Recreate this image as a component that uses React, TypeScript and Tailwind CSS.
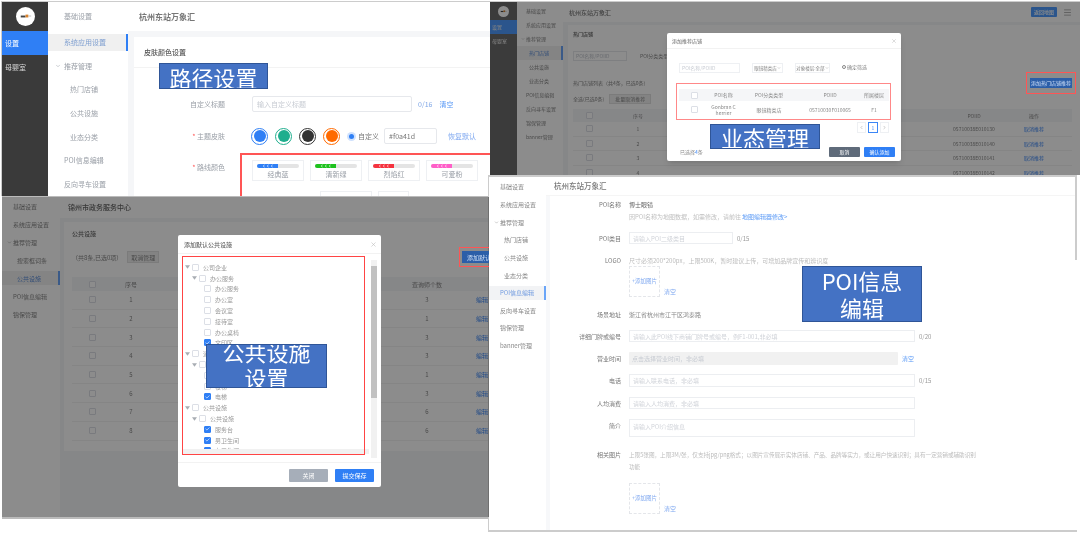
import type { ReactNode } from 'react';
import { Check, ChevronDown, ChevronLeft, ChevronRight, Menu, X } from 'lucide-react';

function Logo({ size }: { size: string }) {
  return (
    <div className={`${size} rounded-full bg-white flex items-center justify-center`}>
      <svg viewBox="0 0 20 20" className="w-full h-full">
        <rect x="5" y="9" width="5" height="2" fill="#444" />
        <rect x="10" y="8" width="3" height="3" fill="#d9822b" />
        <rect x="13" y="9" width="3" height="1" fill="#bbb" />
      </svg>
    </div>
  );
}

// big blue captions pasted over the screenshots
function Caption({ className, children }: { className: string; children: ReactNode }) {
  return (
    <div className={`absolute z-30 bg-[#4472c4] border border-[#2f5597] text-white text-[22px] text-center overflow-hidden ${className}`}>
      {children}
    </div>
  );
}

function Box({ checked, className = '' }: { checked?: boolean; className?: string }) {
  return (
    <span className={`inline-flex shrink-0 items-center justify-center w-[7px] h-[7px] rounded-[1px] border ${checked ? 'bg-[#2f7ff5] border-[#2f7ff5]' : 'bg-white border-[#dcdfe6]'} ${className}`}>
      {checked && <Check size={6} strokeWidth={3} className="text-white" />}
    </span>
  );
}

function Tri() {
  return (
    <svg viewBox="0 0 6 4" className="w-[5px] h-[4px] shrink-0">
      <polygon points="0,0 6,0 3,4" fill="#a8adb3" />
    </svg>
  );
}

const swatches = [
  { name: '经典蓝', bar: 'bg-[#2f7ff5]' },
  { name: '清新绿', bar: 'bg-[#1fc21f]' },
  { name: '烈焰红', bar: 'bg-[#f5333f]' },
  { name: '可爱粉', bar: 'bg-[#ff5fc8]' },
];

function PathWindow() {
  return (
    <section className="absolute left-[1px] top-[1px] w-[489px] h-[195px] flex overflow-hidden bg-white text-[7px] text-[#9ba0a8] border-t border-l border-[#ccc]">
      <div className="w-[46px] shrink-0 bg-[#3a3a3a] flex flex-col text-[#d8d8d8]">
        <div className="h-[29px] flex items-center justify-center"><Logo size="w-[19px] h-[19px]" /></div>
        <div className="h-[24px] bg-[#2f7ff5] text-white flex items-center pl-[3px]">设置</div>
        <div className="h-[24px] flex items-center pl-[3px]">母婴室</div>
      </div>
      <nav className="w-[80px] shrink-0 flex flex-col">
        <div className="h-[29px] flex items-center pl-[16px]">基础设置</div>
        <div className="h-[18px] my-[3px] bg-[#f0f0f0] border-r-2 border-[#2f7ff5] flex items-center pl-[16px] text-[#7f9fd0]">系统应用设置</div>
        <div className="h-[24px] flex items-center pl-[7px] gap-[3px]"><ChevronDown size={6} />推荐管理</div>
        <div className="h-[24px] flex items-center pl-[22px]">热门店铺</div>
        <div className="h-[24px] flex items-center pl-[22px]">公共设施</div>
        <div className="h-[24px] flex items-center pl-[22px]">业态分类</div>
        <div className="h-[24px] flex items-center pl-[16px]">POI信息编辑</div>
        <div className="h-[24px] flex items-center pl-[16px]">反向寻车设置</div>
      </nav>
      <div className="flex-1 flex flex-col bg-[#f5f6f8]">
        <header className="h-[29px] shrink-0 bg-white flex items-center pl-[11px] text-[8px] font-bold text-[#777]">杭州东站万象汇</header>
        <div className="relative flex-1 ml-[6px] mt-[6px] bg-white">
          <div className="h-[31px] border-b border-[#f3f3f3] flex items-center pl-[10px] text-[#555] font-medium">皮肤颜色设置</div>
          <div className="mt-[28px] h-[16px] flex items-center">
            <span className="w-[91px] text-right">自定义标题</span>
            <span className="ml-[27px] w-[160px] h-full border border-[#e6e8ec] rounded-[2px] flex items-center pl-[4px] text-[#c8ccd3]">输入自定义标题</span>
            <span className="ml-[6px] text-[#7fa6e6]">0/16</span>
            <span className="ml-[7px] text-[#5b9af6]">清空</span>
          </div>
          <div className="mt-[15px] h-[18px] flex items-center">
            <span className="w-[91px] text-right"><span className="text-[#f55]">* </span>主题皮肤</span>
            <div className="ml-[26px] flex gap-[7px]">
              <span className="w-[17px] h-[17px] rounded-full border border-[#2f7ff5] p-[1.5px]"><span className="block w-full h-full rounded-full bg-[#2f7ff5]" /></span>
              <span className="w-[17px] h-[17px] rounded-full border border-[#1fae8e] p-[1.5px]"><span className="block w-full h-full rounded-full bg-[#1fae8e]" /></span>
              <span className="w-[17px] h-[17px] rounded-full border border-[#333] p-[1.5px]"><span className="block w-full h-full rounded-full bg-[#333]" /></span>
              <span className="w-[17px] h-[17px] rounded-full border border-[#ff6a00] p-[1.5px]"><span className="block w-full h-full rounded-full bg-[#ff6a00]" /></span>
            </div>
            <span className="ml-[7px] w-[9px] h-[9px] rounded-full bg-[#cfe1fd] flex items-center justify-center"><span className="block w-[5px] h-[5px] rounded-full bg-[#2f7ff5]" /></span>
            <span className="ml-[2px] text-[#777]">自定义</span>
            <span className="ml-[5px] w-[53px] h-[16px] border border-[#e6e8ec] rounded-[2px] flex items-center pl-[4px] text-[#777]">#f0a41d</span>
            <span className="ml-[11px] text-[#7fa8f0]">恢复默认</span>
          </div>
          <div className="mt-[15px] h-[24px] flex">
            <span className="w-[91px] text-right pt-[2px]"><span className="text-[#f55]">* </span>路线颜色</span>
            <div className="ml-[27px] flex gap-[6px]">
              {swatches.map(s => (
                <div key={s.name} className="w-[52px] h-[21px] border border-[#eef0f3] flex flex-col items-center">
                  <div className="mt-[3px] w-[42px] h-[5px] rounded-full bg-[#e4e4e4] overflow-hidden">
                    <div className={`w-[21px] h-full ${s.bar}`}>
                      <svg viewBox="0 0 21 5" className="w-full h-full">
                        <path d="M7 1 5 2.5 7 4M12 1 10 2.5 12 4M17 1 15 2.5 17 4" fill="none" stroke="#fff" strokeWidth="0.7" />
                      </svg>
                    </div>
                  </div>
                  <span className="leading-[12px]">{s.name}</span>
                </div>
              ))}
            </div>
          </div>
          <div className="mt-[7px] ml-[186px] flex gap-[6px]">
            <div className="w-[52px] h-[21px] border border-[#eef0f3]" />
            <div className="w-[31px] h-[21px] border border-[#eef0f3]" />
          </div>
          <div className="absolute left-[106px] top-[116px] w-[260px] h-[50px] border-2 border-[#f55]" />
        </div>
      </div>
      <Caption className="left-[157px] top-[61px] w-[109px] h-[26px] leading-[26px]">路径设置</Caption>
    </section>
  );
}

const hotRows = ['05710038E010130', '05710038E010140', '05710038E010141', '05710038E010142'];

function ShopWindow() {
  return (
    <section className="absolute left-[490px] top-[1px] w-[590px] h-[174px] flex overflow-hidden bg-white text-[5px] text-[#888] border-t border-[#ccc]">
      <div className="w-[27px] shrink-0 bg-[#6c6c6c] flex flex-col text-[#eee]">
        <div className="h-[18px] flex items-center justify-center"><Logo size="w-[11px] h-[11px]" /></div>
        <div className="h-[14px] bg-[#4f9cff] flex items-center pl-[2px]">设置</div>
        <div className="h-[14px] flex items-center pl-[2px]">母婴室</div>
      </div>
      <nav className="w-[46px] shrink-0 flex flex-col pt-[2px]">
        <div className="h-[14px] flex items-center pl-[9px]">基础设置</div>
        <div className="h-[14px] flex items-center pl-[9px]">系统应用设置</div>
        <div className="h-[14px] flex items-center pl-[4px] gap-[1px]"><ChevronDown size={4} />推荐管理</div>
        <div className="h-[14px] bg-[#f0f0f0] border-r-2 border-[#6aa5f8] flex items-center pl-[12px] text-[#5f8fd8]">热门店铺</div>
        <div className="h-[14px] flex items-center pl-[12px]">公共设施</div>
        <div className="h-[14px] flex items-center pl-[12px]">业态分类</div>
        <div className="h-[14px] flex items-center pl-[9px]">POI信息编辑</div>
        <div className="h-[14px] flex items-center pl-[9px]">反向寻车设置</div>
        <div className="h-[14px] flex items-center pl-[9px]">锦保管理</div>
        <div className="h-[14px] flex items-center pl-[9px]">banner管理</div>
      </nav>
      <div className="flex-1 flex flex-col bg-[#f5f6f8]">
        <header className="h-[20px] shrink-0 bg-white flex items-center pl-[6px] pr-[8px] text-[6px] font-medium text-[#777]">
          <span className="flex-1">杭州东站万象汇</span>
          <span className="w-[26px] h-[10px] bg-[#4f9cff] rounded-[1px] text-white text-[5px] flex items-center justify-center">返回地图</span>
          <Menu size={9} className="ml-[6px] text-[#999]" />
        </header>
        <div className="flex-1 ml-[5px] mt-[3px] bg-white pl-[5px] flex flex-col">
          <div className="h-[18px] flex items-center font-medium text-[#666]">热门店铺</div>
          <div className="mt-[8px] h-[10px] flex items-center gap-[13px]">
            <span className="w-[54px] h-full border border-[#e6e8ec] pl-[2px] flex items-center text-[#c0c4cc]">POI名称/POIID</span>
            <span>POI分类类型</span>
          </div>
          <div className="mt-[18px] h-[8px] flex items-center">热门店铺列表（共4条，已选0条）</div>
          <div className="mt-[7px] h-[10px] flex items-center gap-[5px]">
            <span>全选(已选0条)</span>
            <span className="w-[42px] h-full bg-[#eee] border border-[#e0e0e0] flex items-center justify-center">批量取消推荐</span>
          </div>
          <div className="mt-[5px] mr-[8px] flex flex-col">
            <div className="h-[13px] bg-[#f5f6f8] flex items-center">
              <span className="w-[32px] flex justify-center"><Box /></span>
              <span className="w-[66px] text-center">序号</span>
              <span className="w-[270px]" />
              <span className="w-[66px] text-center">POIID</span>
              <span className="w-[54px] text-center">操作</span>
            </div>
            {hotRows.map((id, i) => (
              <div key={id} className="h-[14.6px] shrink-0 border-b border-[#f2f2f2] flex items-center">
                <span className="w-[32px] flex justify-center"><Box /></span>
                <span className="w-[66px] text-center">{i + 1}</span>
                <span className="w-[270px]" />
                <span className="w-[66px] text-center">{id}</span>
                <span className="w-[54px] text-center text-[#3b86f6]">取消推荐</span>
              </div>
            ))}
          </div>
        </div>
      </div>
      <div className="absolute inset-0 bg-black/45 z-10" />
      <div className="absolute left-[536px] top-[70px] w-[50px] h-[22px] border border-[#f55] z-10 flex items-center justify-center">
        <span className="w-[42px] h-[10px] bg-[#2b5ea8] text-[#cfe0f8] flex items-center justify-center">添加热门店铺推荐</span>
      </div>
      <div className="absolute left-[177px] top-[31px] w-[234px] h-[128px] bg-white rounded-[2px] z-20 flex flex-col shadow-md">
        <div className="h-[16px] shrink-0 border-b border-[#f2f2f2] flex items-center justify-between pl-[5px] pr-[4px] text-[#666]">
          <span>添加推荐店铺</span><X size={6} className="text-[#bbb]" />
        </div>
        <div className="mt-[14px] pl-[12px] h-[10px] flex items-center whitespace-nowrap">
          <span className="w-[61px] h-full border border-[#eef0f3] pl-[2px] flex items-center text-[#c8ccd3]">POI名称/POIID</span>
          <span className="ml-[12px] w-[31px] h-full border border-[#eef0f3] flex items-center justify-center text-[4.5px]">眼镜精类店<ChevronDown size={4} /></span>
          <span className="ml-[12px] w-[35px] h-full border border-[#eef0f3] flex items-center justify-center text-[4.5px]">对象楼层:全部<ChevronDown size={4} /></span>
          <span className="ml-[12px] flex items-center gap-[1px] -mt-[3px]"><span className="w-[4px] h-[4px] rounded-full border border-[#888]" />确定筛选</span>
        </div>
        <div className="mt-[16px] mx-[12px] flex flex-col">
          <div className="h-[12px] bg-[#f5f6f8] flex items-center text-center">
            <span className="w-[30px] flex justify-center"><Box /></span>
            <span className="w-[29px]">POI名称</span>
            <span className="w-[62px]">POI分类类型</span>
            <span className="w-[60px]">POIID</span>
            <span className="w-[28px]">所属楼层</span>
          </div>
          <div className="h-[17px] flex items-center text-center leading-[6px]">
            <span className="w-[30px] flex justify-center"><Box /></span>
            <span className="w-[29px]">Gonbran C<br />herrier</span>
            <span className="w-[62px]">眼镜精类店</span>
            <span className="w-[60px]">05710030F010065</span>
            <span className="w-[28px]">F1</span>
          </div>
        </div>
        <div className="mt-[4px] pr-[12px] flex justify-end gap-[2px]">
          <span className="w-[9px] h-[11px] border border-[#eef0f3] flex items-center justify-center"><ChevronLeft size={5} /></span>
          <span className="w-[10px] h-[11px] border border-[#3b86f6] text-[#3b86f6] flex items-center justify-center">1</span>
          <span className="w-[9px] h-[11px] border border-[#eef0f3] flex items-center justify-center"><ChevronRight size={5} /></span>
        </div>
        <div className="mt-auto mb-[4px] pl-[13px] pr-[6px] flex items-center justify-between">
          <span>已选择<span className="text-[#3b86f6]">4</span>条</span>
          <div className="flex gap-[4px] text-white">
            <span className="w-[31px] h-[10px] bg-[#5f6b7a] rounded-[1px] flex items-center justify-center">取消</span>
            <span className="w-[31px] h-[10px] bg-[#2f7ff5] rounded-[1px] flex items-center justify-center">确认添加</span>
          </div>
        </div>
      </div>
      <div className="absolute left-[186px] top-[81px] w-[215px] h-[37px] border-[1.5px] border-[#f88] z-20" />
      <Caption className="left-[220px] top-[122px] w-[110px] h-[25px] leading-[24px]">业态管理</Caption>
    </section>
  );
}

const tree: { name: string; level: 0 | 1 | 2; checked?: boolean }[] = [
  { name: '公司企业', level: 0 },
  { name: '办公服务', level: 1 },
  { name: '办公服务', level: 2 },
  { name: '办公室', level: 2 },
  { name: '会议室', level: 2 },
  { name: '接待室', level: 2 },
  { name: '办公桌椅', level: 2 },
  { name: '文印区', level: 2, checked: true },
  { name: '通行设施', level: 0 },
  { name: '垂直交通', level: 1 },
  { name: '扶梯', level: 2 },
  { name: '楼梯', level: 2 },
  { name: '电梯', level: 2, checked: true },
  { name: '公共设施', level: 0 },
  { name: '公共设施', level: 1 },
  { name: '服务台', level: 2, checked: true },
  { name: '男卫生间', level: 2, checked: true },
  { name: '女卫生间', level: 2, checked: true },
];

const facilityCounts = [3, 1, 3, 3, 1, 3, 6, 6];

function FacilityWindow() {
  return (
    <section className="absolute left-[2px] top-[196px] w-[487px] h-[323px] flex overflow-hidden bg-white text-[6px] text-[#888] border-t border-b-2 border-[#bbb]">
      <nav className="w-[58px] shrink-0 flex flex-col">
        <div className="h-[18px] flex items-center pl-[11px]">基础设置</div>
        <div className="h-[18px] flex items-center pl-[11px]">系统应用设置</div>
        <div className="h-[18px] flex items-center pl-[5px] gap-[1px]"><ChevronDown size={5} />推荐管理</div>
        <div className="h-[18px] flex items-center pl-[15px]">搜索框词条</div>
        <div className="h-[14px] my-[2px] bg-[#f0f0f0] border-r-2 border-[#6aa5f8] flex items-center pl-[15px] text-[#5f8fd8]">公共设施</div>
        <div className="h-[18px] flex items-center pl-[11px]">POI信息编辑</div>
        <div className="h-[18px] flex items-center pl-[11px]">锦保管理</div>
      </nav>
      <div className="flex-1 flex flex-col bg-[#f5f6f8]">
        <header className="h-[21px] shrink-0 bg-white flex items-center pl-[8px] text-[7px] font-medium text-[#666]">锦州市政务服务中心</header>
        <div className="flex-1 ml-[4px] mt-[4px] mb-[66px] bg-white pl-[8px] flex flex-col">
          <div className="h-[22px] flex items-center font-medium text-[#666]">公共设施</div>
          <div className="mt-[7px] h-[12px] flex items-center gap-[5px]">
            <span>（共8条,已选0项）</span>
            <span className="w-[32px] h-full bg-[#eee] border border-[#e0e0e0] flex items-center justify-center">取消管理</span>
          </div>
          <div className="mt-[14px] flex flex-col">
            <div className="h-[14px] bg-[#f5f6f8] flex items-center">
              <span className="w-[40px] flex justify-center"><Box /></span>
              <span className="w-[38px] text-center">序号</span>
              <span className="w-[240px]" />
              <span className="w-[74px] text-center">查询师个数</span>
            </div>
            {facilityCounts.map((count, i) => (
              <div key={i} className="h-[18.7px] shrink-0 border-b border-[#f2f2f2] flex items-center">
                <span className="w-[40px] flex justify-center"><Box /></span>
                <span className="w-[38px] text-center">{i + 1}</span>
                <span className="w-[240px]" />
                <span className="w-[74px] text-center">{count}</span>
                <span className="ml-[12px] text-[#3b86f6]">编辑</span>
              </div>
            ))}
          </div>
        </div>
      </div>
      <div className="absolute inset-0 bg-black/45 z-10" />
      <div className="absolute left-[457px] top-[50px] w-[30px] h-[20px] border border-[#f55] border-r-0 z-10 flex items-center pl-[2px]">
        <span className="w-[28px] h-[12px] bg-[#2b5ea8] text-[#cfe0f8] flex items-center pl-[5px] whitespace-nowrap overflow-hidden">添加默认</span>
      </div>
      <div className="absolute left-[176px] top-[38px] w-[203px] h-[252px] bg-white rounded-[2px] z-20 flex flex-col">
        <div className="h-[19px] shrink-0 border-b border-[#f2f2f2] flex items-center justify-between pl-[6px] pr-[4px] font-medium text-[#666]">
          <span>添加默认公共设施</span><X size={7} className="text-[#bbb]" />
        </div>
        <div className="relative mx-[4px] mt-[2px] h-[198px] flex">
          <div className="w-[187px] h-[198px] overflow-hidden pt-[6px] relative">
            {tree.map((row, i) => (
              <div key={i} className={`h-[10.8px] flex items-center ${row.level === 0 ? 'pl-[3px]' : row.level === 1 ? 'pl-[10px]' : 'pl-[22px]'}`}>
                {row.level < 2 && <Tri />}
                <Box checked={row.checked} className={row.level < 2 ? 'ml-[2px]' : ''} />
                <span className="ml-[4px] text-[#999]">{row.name}</span>
              </div>
            ))}
            <div className="absolute left-0 bottom-0 w-full h-[5px] bg-[#f1f1f1]" />
          </div>
          <div className="w-[6px] ml-[2px] h-[198px] bg-[#f1f1f1] mt-[4px]">
            <div className="mt-[6px] w-full h-[132px] bg-[#c1c1c1]" />
          </div>
        </div>
        <div className="mt-auto h-[25px] border-t border-[#f2f2f2] flex items-center justify-end gap-[7px] pr-[7px] text-white">
          <span className="w-[39px] h-[13px] bg-[#a6aeb9] rounded-[1px] flex items-center justify-center">关闭</span>
          <span className="w-[39px] h-[13px] bg-[#2f7ff5] rounded-[1px] flex items-center justify-center">提交保存</span>
        </div>
      </div>
      <div className="absolute left-[180px] top-[59px] w-[183px] h-[199px] border border-[#f44] z-20" />
      <Caption className="left-[204px] top-[147px] w-[121px] h-[44px] leading-[26px]"><div className="-mt-[7px]">公共设施<br />设置</div></Caption>
    </section>
  );
}

function Field({ label, className, children }: { label: string; className: string; children: ReactNode }) {
  return (
    <div className={`flex items-center ${className}`}>
      <span className="w-[71px] shrink-0 text-right text-[#777]">{label}</span>
      <div className="ml-[8px] flex-1 h-full flex items-center">{children}</div>
    </div>
  );
}

function Upload({ className }: { className: string }) {
  return (
    <div className={`ml-[79px] flex items-end gap-[4px] ${className}`}>
      <div className="w-[31px] h-[31px] border border-dashed border-[#e4e6ea] flex items-center justify-center text-[#7fa8f0] text-[5.5px]">+添加图片</div>
      <span className="text-[#7fa8f0] mb-[1px]">清空</span>
    </div>
  );
}

function PoiWindow() {
  return (
    <section className="absolute left-[488px] top-[175px] w-[589px] h-[357px] flex overflow-hidden bg-white text-[6px] text-[#aaa] border-t-2 border-l border-b-2 border-[#ccc]">
      <nav className="w-[57px] shrink-0 flex flex-col -mt-[1px]">
        <div className="h-[20px] flex items-center pl-[11px] text-[#888]">基础设置</div>
        <div className="h-[17.6px] flex items-center pl-[11px] text-[#888]">系统应用设置</div>
        <div className="h-[17.6px] flex items-center pl-[5px] gap-[1px] text-[#888]"><ChevronDown size={5} />推荐管理</div>
        <div className="h-[17.6px] flex items-center pl-[15px] text-[#888]">热门店铺</div>
        <div className="h-[17.6px] flex items-center pl-[15px] text-[#888]">公共设施</div>
        <div className="h-[17.6px] flex items-center pl-[15px] text-[#888]">业态分类</div>
        <div className="h-[14px] my-[1.8px] bg-[#f2f3f5] border-r-2 border-[#6aa5f8] flex items-center pl-[11px] text-[#6f9ae0]">POI信息编辑</div>
        <div className="h-[17.6px] flex items-center pl-[11px] text-[#888]">反向寻车设置</div>
        <div className="h-[17.6px] flex items-center pl-[11px] text-[#888]">锦保管理</div>
        <div className="h-[17.6px] flex items-center pl-[11px] text-[#888]">banner管理</div>
      </nav>
      <div className="flex-1 flex flex-col bg-[#f7f8fa]">
        <header className="h-[19px] shrink-0 bg-white border-b border-[#f5f5f5] flex items-center pl-[8px] text-[7.5px] font-medium text-[#777]">杭州东站万象汇</header>
        <div className="flex-1 ml-[4px] bg-white flex flex-col">
          <Field label="POI名称" className="h-[12px] mt-[2px]"><span className="text-[#666]">博士眼镜</span></Field>
          <div className="ml-[79px] h-[12px] flex items-center text-[#c0c0c0]">因POI名称为地图数据，如需修改，请前往<span className="text-[#5b9af6] ml-[1px]">地图编辑器修改&gt;</span></div>
          <Field label="POI类目" className="h-[12px] mt-[10px]">
            <span className="w-[104px] h-full border border-[#eceef1] flex items-center pl-[3px] text-[#d0d3d9]">请输入POI二级类目</span>
            <span className="ml-[4px] text-[#999]">0/15</span>
          </Field>
          <Field label="LOGO" className="h-[12px] mt-[10px]"><span className="text-[#bbb]">尺寸必须200*200px，上限500K，暂时建议上传，可增加品牌宣传和辨识度</span></Field>
          <Upload className="mt-[0px]" />
          <Field label="场景地址" className="h-[12px] mt-[11px]"><span className="text-[#888]">浙江省杭州市江干区鸿泰路</span></Field>
          <Field label="详细门牌或编号" className="h-[12px] mt-[10px]">
            <span className="w-[286px] h-full border border-[#eceef1] flex items-center pl-[3px] text-[#d0d3d9]">请输入此POI线下商铺门牌号或编号，例F1-001,非必填</span>
            <span className="ml-[4px] text-[#999]">0/20</span>
          </Field>
          <Field label="营业时间" className="h-[13px] mt-[10px]">
            <span className="w-[269px] h-full bg-[#f1f1f1] rounded-[1px] flex items-center pl-[3px] text-[#c8ccd3]">点击选择营业时间，非必填</span>
            <span className="ml-[4px] text-[#5b9af6]">清空</span>
          </Field>
          <Field label="电话" className="h-[13px] mt-[9px]">
            <span className="w-[286px] h-full border border-[#eceef1] flex items-center pl-[3px] text-[#d0d3d9]">请输入联系电话，非必填</span>
            <span className="ml-[4px] text-[#999]">0/15</span>
          </Field>
          <Field label="人均消费" className="h-[12px] mt-[10px]">
            <span className="w-[286px] h-full border border-[#eceef1] flex items-center pl-[3px] text-[#d0d3d9]">请输入人均消费，非必填</span>
          </Field>
          <div className="mt-[10px] h-[18px] flex">
            <span className="w-[71px] shrink-0 text-right text-[#777] pt-[2px]">简介</span>
            <span className="ml-[8px] w-[286px] h-full border border-[#eceef1] pl-[3px] pt-[2px] text-[#d0d3d9]">请输入POI介绍信息</span>
          </div>
          <div className="mt-[12px] flex">
            <span className="w-[71px] shrink-0 text-right text-[#777] leading-[12px]">相关图片</span>
            <p className="ml-[8px] leading-[12px] text-[#bbb] text-[5.6px] whitespace-nowrap">上限5张图，上限3M/张，仅支持jpg/png格式；以图片宣传展示实体店铺、产品、品牌等实力，或让用户快速识别；具有一定营销或辅助识别<br />功能</p>
          </div>
          <Upload className="mt-[10px]" />
        </div>
      </div>
      <div className="absolute right-0 top-0 w-[2px] h-[83px] bg-[#ccc]" />
      <Caption className="left-[313px] top-[89px] w-[120px] h-[56px] leading-[27px]">POI信息<br />编辑</Caption>
    </section>
  );
}

export default function App() {
  return (
    <div className="relative w-[1080px] h-[535px] overflow-hidden bg-white font-['Noto_Sans_CJK_SC','Liberation_Sans',sans-serif] blur-[0.6px]">
      <PathWindow />
      <ShopWindow />
      <FacilityWindow />
      <PoiWindow />
    </div>
  );
}
